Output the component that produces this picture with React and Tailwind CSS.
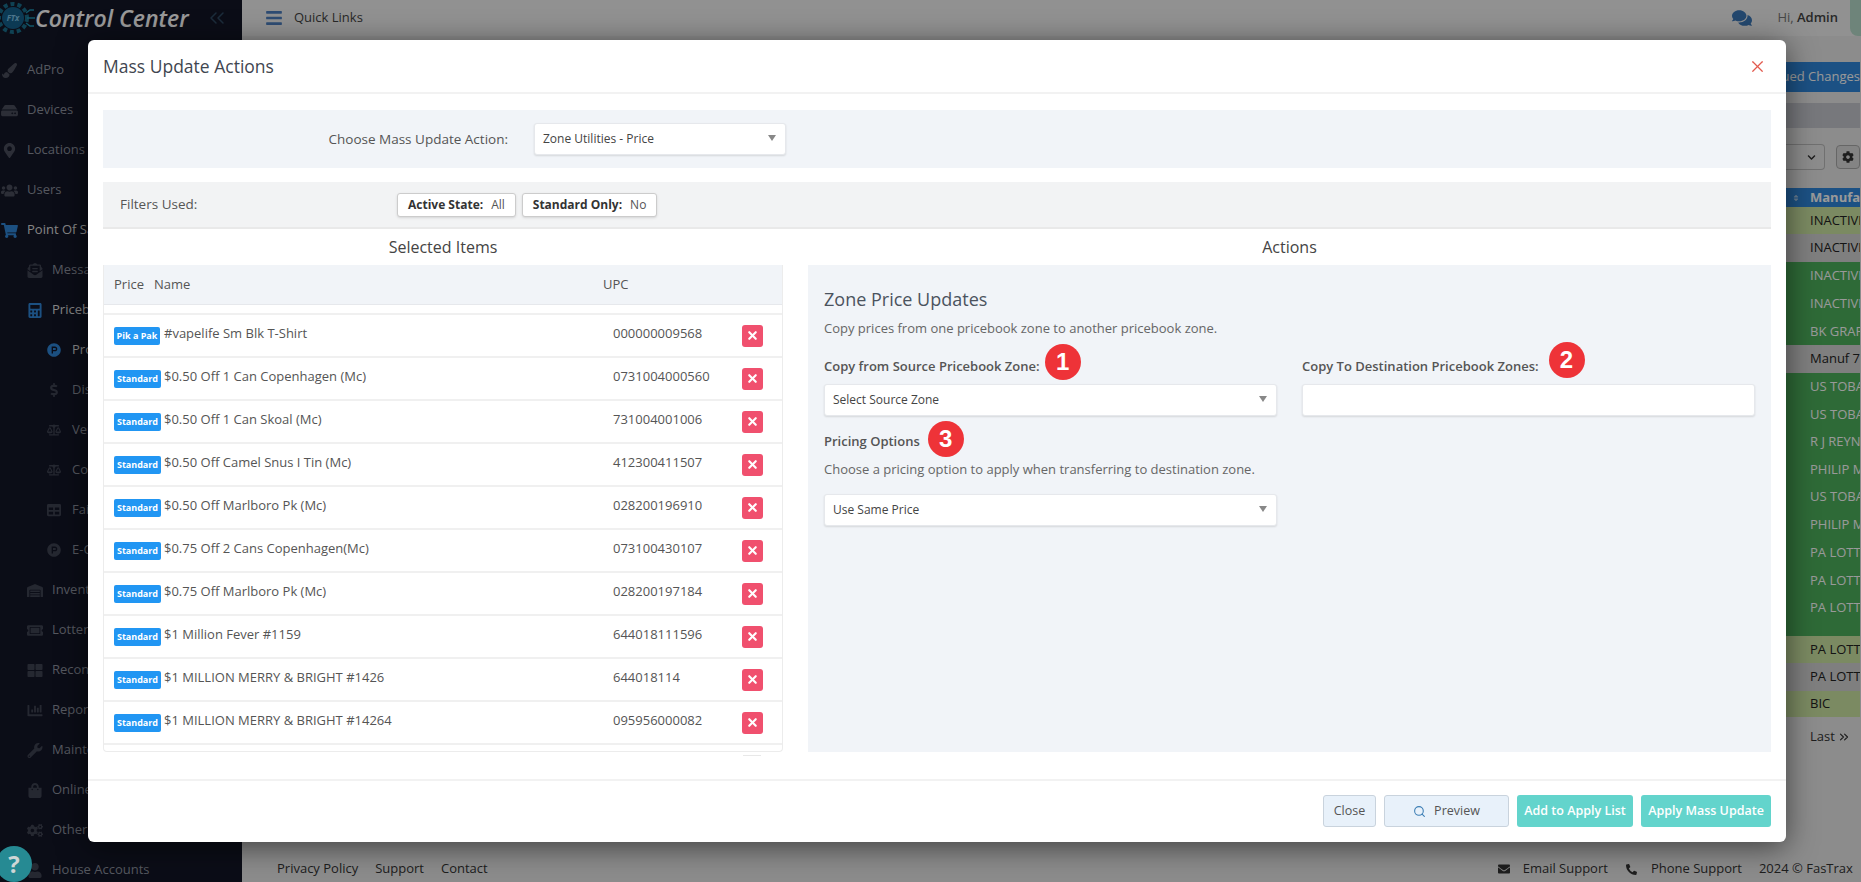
import {
  FaPaintBrush, FaHdd, FaMapMarkerAlt, FaUsers, FaShoppingCart, FaEnvelopeOpenText, FaCalculator,
  FaProductHunt, FaDollarSign, FaBalanceScale, FaTable, FaWarehouse, FaTicketAlt, FaThLarge, FaChartBar,
  FaWrench, FaShoppingBag, FaCogs, FaUser, FaCog, FaEnvelope, FaPhoneAlt, FaBars, FaComments, FaChevronDown, FaSort,
} from "react-icons/fa"
import { Search, X, ChevronsLeft, ChevronsRight } from "lucide-react"

const navItems = [
  { label: "AdPro", icon: FaPaintBrush, level: 0 },
  { label: "Devices", icon: FaHdd, level: 0 },
  { label: "Locations", icon: FaMapMarkerAlt, level: 0 },
  { label: "Users", icon: FaUsers, level: 0 },
  { label: "Point Of Sale", icon: FaShoppingCart, level: 0, active: true },
  { label: "Messages", icon: FaEnvelopeOpenText, level: 1 },
  { label: "Pricebook", icon: FaCalculator, level: 1, active: true },
  { label: "Products", icon: FaProductHunt, level: 2, active: true },
  { label: "Discounts", icon: FaDollarSign, level: 2 },
  { label: "Vendors", icon: FaBalanceScale, level: 2 },
  { label: "Cost", icon: FaBalanceScale, level: 2 },
  { label: "Failed", icon: FaTable, level: 2 },
  { label: "E-Commerce", icon: FaProductHunt, level: 2 },
  { label: "Inventory", icon: FaWarehouse, level: 1 },
  { label: "Lottery", icon: FaTicketAlt, level: 1 },
  { label: "Reconcile", icon: FaThLarge, level: 1 },
  { label: "Reports", icon: FaChartBar, level: 1 },
  { label: "Maintenance", icon: FaWrench, level: 1 },
  { label: "Online", icon: FaShoppingBag, level: 1 },
  { label: "Other", icon: FaCogs, level: 1 },
  { label: "House Accounts", icon: FaUser, level: 1 },
]

const selectedItems = [
  { price: "Pik a Pak", name: "#vapelife Sm Blk T-Shirt", upc: "000000009568" },
  { price: "Standard", name: "$0.50 Off 1 Can Copenhagen (Mc)", upc: "0731004000560" },
  { price: "Standard", name: "$0.50 Off 1 Can Skoal (Mc)", upc: "731004001006" },
  { price: "Standard", name: "$0.50 Off Camel Snus I Tin (Mc)", upc: "412300411507" },
  { price: "Standard", name: "$0.50 Off Marlboro Pk (Mc)", upc: "028200196910" },
  { price: "Standard", name: "$0.75 Off 2 Cans Copenhagen(Mc)", upc: "073100430107" },
  { price: "Standard", name: "$0.75 Off Marlboro Pk (Mc)", upc: "028200197184" },
  { price: "Standard", name: "$1 Million Fever #1159", upc: "644018111596" },
  { price: "Standard", name: "$1 MILLION MERRY & BRIGHT #1426", upc: "644018114" },
  { price: "Standard", name: "$1 MILLION MERRY & BRIGHT #14264", upc: "095956000082" },
]

const backRows = [
  { text: "INACTIVE", tone: "olive", h: "h-[27px]" },
  { text: "INACTIVE", tone: "gray", h: "h-[28px]" },
  { text: "INACTIVE", tone: "green", h: "h-[28px]" },
  { text: "INACTIVE", tone: "green", h: "h-[28px]" },
  { text: "BK GRAPHICS", tone: "green", h: "h-[27px]" },
  { text: "Manuf 7051", tone: "gray", h: "h-[28px]" },
  { text: "US TOBACCO", tone: "green", h: "h-[28px]" },
  { text: "US TOBACCO", tone: "green", h: "h-[27px]" },
  { text: "R J REYNOLDS", tone: "green", h: "h-[28px]" },
  { text: "PHILIP MORRIS", tone: "green", h: "h-[27px]" },
  { text: "US TOBACCO", tone: "green", h: "h-[28px]" },
  { text: "PHILIP MORRIS", tone: "green", h: "h-[28px]" },
  { text: "PA LOTTERY", tone: "green", h: "h-[28px]" },
  { text: "PA LOTTERY", tone: "green", h: "h-[27px]" },
  { text: "PA LOTTERY", tone: "green", h: "h-[42px] pb-[14px]" },
  { text: "PA LOTTERY", tone: "olive", h: "h-[27px]" },
  { text: "PA LOTTERY", tone: "gray", h: "h-[28px]" },
  { text: "BIC", tone: "olive", h: "h-[26px]" },
]

const toneClass = {
  olive: "bg-[#cde6a3] text-[#222]",
  gray: "bg-[#d4d4d4] text-[#222]",
  green: "bg-[#4db15c] text-white",
}

function Logo() {
  return (
    <svg width="36" height="36" viewBox="0 0 36 36">
      <circle cx="13" cy="18" r="14" fill="none" stroke="#1a6f8c" strokeWidth="4" strokeDasharray="4 3" />
      <circle cx="13" cy="18" r="11" fill="#15618c" />
      <path d="M26 13 L30 10 L34 10 M27 18 L35 18 M26 23 L30 26 L34 26" stroke="#1c8fb0" strokeWidth="1.5" fill="none" />
      <text x="13" y="21" textAnchor="middle" fontSize="8" fontWeight="700" fontStyle="italic" fill="#7fc4e8">FTx</text>
    </svg>
  )
}

function Sidebar() {
  return (
    <aside className="w-[242px] h-full shrink-0 bg-[#131627] text-[#8e939f] text-[13px] overflow-hidden">
      <div className="flex items-center h-[36px] mb-[14px]">
        <Logo />
        <span className="text-[23px] leading-none font-semibold italic text-white -ml-[1px] whitespace-nowrap">
          Control Center
        </span>
        <ChevronsLeft className="ml-[16px] text-[#2f4a63]" size={24} strokeWidth={1.5} />
      </div>

      {navItems.map((item) => (
        <div key={item.label} className="relative h-10 flex items-center whitespace-nowrap">
          {item.level === 0 && (
            <>
              <item.icon className={item.active ? "ml-[1px] w-[17px] text-[#2f86d8]" : "ml-[1px] w-[17px] text-[#4a4e5c]"} size={15} />
              <span className={item.active ? "ml-[9px] text-[#dddddd]" : "ml-[9px]"}>{item.label}</span>
            </>
          )}
          {item.level === 1 && (
            <>
              <item.icon className={item.active ? "ml-[28px] w-[14px] text-[#2f86d8]" : "ml-[27px] w-[16px] text-[#3f4352]"} size={15} />
              <span className={item.active ? "ml-[10px] text-[#dddddd]" : "ml-[9px]"}>{item.label}</span>
            </>
          )}
          {item.level === 2 && (
            <>
              <item.icon className={item.active ? "ml-[47px] w-[14px] text-[#2f86d8]" : "ml-[47px] w-[14px] text-[#3f4352]"} size={14} />
              <span className={item.active ? "ml-[11px] text-[#dddddd]" : "ml-[11px]"}>{item.label}</span>
            </>
          )}
        </div>
      ))}
    </aside>
  )
}

function BackPage() {
  return (
    <main className="flex-1 min-w-0 h-full flex flex-col bg-[#eaeaea] text-[13px] text-[#333]">
      <div className="h-[36px] shrink-0 flex items-center bg-[#f2f2f2] pl-[23px]">
        <FaBars className="text-[#4d7fc0]" size={18} />
        <span className="ml-[11px] text-[#444]">Quick Links</span>
        <FaComments className="ml-auto text-[#3c78b8]" size={20} />
        <span className="ml-[25px] text-[#777]">
          Hi, <b className="font-semibold text-[#444]">Admin</b>
        </span>
        <div className="ml-[12px] w-[11px] h-[36px] bg-[#b8dccb] rounded-bl-lg" />
      </div>

      <div className="flex-1 min-h-0 flex justify-end overflow-hidden">
        <div className="w-[74px] mr-[1px]">
          <div className="mt-[26px] h-[30px] bg-[#2f87dc] text-white flex items-center whitespace-nowrap overflow-hidden justify-end">
            ued Changes
          </div>
          <div className="mt-[11px] h-[25px] bg-[#c7c9cf]" />
          <div className="mt-[16px] h-[26px] flex items-center">
            <div className="w-[39px] h-[26px] border border-[#bbb] border-l-0 rounded-r flex items-center justify-end pr-[8px]">
              <FaChevronDown size={9} className="text-[#333]" />
            </div>
            <div className="ml-[11px] w-[24px] h-[24px] border border-[#aaa] rounded flex items-center justify-center bg-[#ddd]">
              <FaCog size={12} className="text-[#333]" />
            </div>
          </div>
          <div className="mt-[18px] h-[19px] bg-[#2f87dc] text-white font-bold flex items-center whitespace-nowrap overflow-hidden pl-[6px]">
            <FaSort size={8} className="mr-[10px] shrink-0 opacity-60" />
            Manufacturer
          </div>
          {backRows.map((row, i) => (
            <div
              key={i}
              className={`${row.h} ${toneClass[row.tone]} flex items-center pl-[24px] whitespace-nowrap overflow-hidden`}
            >
              {row.text}
            </div>
          ))}
          <div className="mt-[10px] flex items-center pl-[24px] whitespace-nowrap text-[#333]">
            Last <ChevronsRight size={14} className="ml-[2px]" />
          </div>
        </div>
      </div>

      <div className="h-[26px] shrink-0 flex items-center pl-[35px] whitespace-nowrap overflow-hidden">
        <span>Privacy Policy</span>
        <span className="ml-[17px]">Support</span>
        <span className="ml-[17px]">Contact</span>
        <FaEnvelope className="ml-[1010px] shrink-0" size={12} />
        <span className="ml-[13px]">Email Support</span>
        <FaPhoneAlt className="ml-[18px] shrink-0" size={11} />
        <span className="ml-[14px]">Phone Support</span>
        <span className="ml-[17px]">2024 © FasTrax</span>
      </div>
    </main>
  )
}

function SelectBox({ value, className = "" }) {
  return (
    <div className={`h-[32px] bg-white border border-[#e6e8ec] rounded-[3px] shadow-[0_1px_2px_rgba(0,0,0,0.12)] flex items-center pl-[8px] pr-[9px] text-[12px] text-[#444] ${className}`}>
      <span>{value}</span>
      {value && <span className="ml-auto -mt-[2px] border-x-[4px] border-t-[6px] border-x-transparent border-t-[#888]" />}
    </div>
  )
}

function StepBadge({ n, className }) {
  return (
    <span className={`absolute w-[36px] h-[36px] rounded-full bg-[#ee3338] text-white text-[24px] leading-none font-['Liberation_Sans',sans-serif] flex items-center justify-center ${className}`}>
      {n}
    </span>
  )
}

function ItemRow({ item }) {
  return (
    <div className="h-[43px] border-b-2 border-[#f0f0f0] flex items-center text-[13px] text-[#555]">
      <span className={`ml-[10px] h-[18px] bg-[#2196f3] rounded-[2px] text-white text-[9px] font-bold flex items-center justify-center ${item.price === "Standard" ? "w-[47px]" : "w-[46px]"}`}>
        {item.price}
      </span>
      <span className={`${item.price === "Standard" ? "ml-[3px]" : "ml-[4px]"} w-[449px] whitespace-nowrap -mt-[3px]`}>{item.name}</span>
      <span className="w-[129px] -mt-[3px]">{item.upc}</span>
      <button className="w-[21px] h-[22px] bg-[#f0506e] rounded-[3px] flex items-center justify-center text-white">
        <X size={13} strokeWidth={4} />
      </button>
    </div>
  )
}

function MassUpdateModal() {
  return (
    <div className="w-[1698px] h-[802px] bg-white rounded-md shadow-[0_5px_30px_rgba(0,0,0,0.55)] flex flex-col text-[#555]">
      <div className="h-[54px] shrink-0 border-b-2 border-[#f2f2f2] flex items-center pl-[15px] pr-[19px]">
        <h2 className="text-[17.5px] text-[#3f4650]">Mass Update Actions</h2>
        <X className="ml-auto text-[#e25a4e]" size={19} strokeWidth={1.5} />
      </div>

      <div className="flex-1 min-h-0 px-[15px] pt-[16px] overflow-hidden">
        <div className="h-[58px] bg-[#f1f4f8] flex items-center">
          <label className="w-[405px] text-right text-[13.5px] text-[#555]">Choose Mass Update Action:</label>
          <SelectBox value="Zone Utilities - Price" className="ml-[26px] w-[252px]" />
        </div>

        <div className="mt-[14px] h-[47px] bg-[#f2f3f4] border-b-2 border-[#e9e9e9] flex items-center pl-[17px] text-[13.5px]">
          <span className="w-[277px]">Filters Used:</span>
          <span className="h-[24px] px-[10px] bg-white border border-[#ccc] rounded-[3px] shadow-sm flex items-center text-[12px]">
            <b className="font-bold text-[#333] mr-[8px]">Active State:</b>All
          </span>
          <span className="ml-[6px] h-[24px] px-[10px] bg-white border border-[#ccc] rounded-[3px] shadow-sm flex items-center text-[12px]">
            <b className="font-bold text-[#333] mr-[8px]">Standard Only:</b>No
          </span>
        </div>

        <div className="grid grid-cols-[680px_963px] gap-x-[25px]">
          <h3 className="h-[36px] flex items-center justify-center text-[16px] text-[#444]">Selected Items</h3>
          <h3 className="h-[36px] flex items-center justify-center text-[16px] text-[#444]">Actions</h3>

          <div>
            <div className="h-[487px] border-x border-b border-[#ececec] rounded-b-sm overflow-hidden">
              <div className="h-[40px] bg-[#f1f4f8] border-b border-[#e6e8ec] flex items-center text-[13px] text-[#555]">
                <span className="w-[60px] pl-[10px]">Price</span>
                <span className="w-[449px] -ml-[10px]">Name</span>
                <span className="ml-[0px]">UPC</span>
              </div>
              <div className="h-[10px] border-b-2 border-[#f0f0f0]" />
              {selectedItems.map((item) => (
                <ItemRow key={item.name} item={item} />
              ))}
            </div>
            <div className="mt-[3px] ml-[640px] w-[18px] h-px bg-[#e8e8e8]" />
          </div>

          <div className="h-[487px] bg-[#f1f4f8] px-[16px] pt-[22px]">
            <h4 className="text-[18px] leading-[24px] text-[#4b535e]">Zone Price Updates</h4>
            <p className="mt-[8px] text-[13px] leading-[18px] text-[#666]">Copy prices from one pricebook zone to another pricebook zone.</p>
            <div className="mt-[16px] grid grid-cols-2 gap-x-[25px]">
              <div>
                <label className="relative inline-block text-[13px] leading-[18px] font-semibold text-[#555]">
                  Copy from Source Pricebook Zone:
                  <StepBadge n="1" className="left-[calc(100%+5px)] -top-[13px]" />
                </label>
                <SelectBox value="Select Source Zone" className="mt-[7px]" />
              </div>
              <div>
                <label className="relative inline-block text-[13px] leading-[18px] font-semibold text-[#555]">
                  Copy To Destination Pricebook Zones:
                  <StepBadge n="2" className="left-[calc(100%+10px)] -top-[15px]" />
                </label>
                <SelectBox value="" className="mt-[7px]" />
              </div>
            </div>
            <label className="relative inline-block mt-[16px] text-[13px] leading-[18px] font-semibold text-[#555]">
              Pricing Options
              <StepBadge n="3" className="left-[calc(100%+8px)] -top-[11px]" />
            </label>
            <p className="mt-[8px] text-[13px] leading-[18px] text-[#666]">Choose a pricing option to apply when transferring to destination zone.</p>
            <SelectBox value="Use Same Price" className="mt-[16px] w-[453px]" />
          </div>
        </div>
      </div>

      <div className="h-[63px] shrink-0 border-t-2 border-[#f2f2f2] flex justify-end gap-[8px] pt-[14px] pr-[15px] text-[12.5px]">
        <button className="w-[53px] h-[32px] bg-[#e8f1fa] border border-[#c9d3dd] rounded-[3px] text-[#555]">Close</button>
        <button className="w-[125px] h-[32px] bg-[#e8f1fa] border border-[#c9d3dd] rounded-[3px] text-[#555] flex items-center justify-center gap-[8px]">
          <Search size={13} className="text-[#3d7fb5]" />
          Preview
        </button>
        <button className="w-[116px] h-[32px] bg-[#63d4cc] rounded-[3px] text-white font-semibold">Add to Apply List</button>
        <button className="w-[130px] h-[32px] bg-[#63d4cc] rounded-[3px] text-white font-semibold">Apply Mass Update</button>
      </div>
    </div>
  )
}

export default function App() {
  return (
    <div className="relative w-[1861px] h-[882px] overflow-hidden flex font-['Open_Sans',sans-serif]">
      <Sidebar />
      <BackPage />
      {/* modal backdrop */}
      <div className="absolute inset-0 bg-black/40 pt-[40px] pl-[88px]">
        <MassUpdateModal />
      </div>
      <div className="absolute left-[-4px] top-[846px] w-[36px] h-[36px] rounded-full bg-[#268a93] text-[#cfd6d6] text-[24px] font-bold flex items-center justify-center">
        ?
      </div>
    </div>
  )
}
